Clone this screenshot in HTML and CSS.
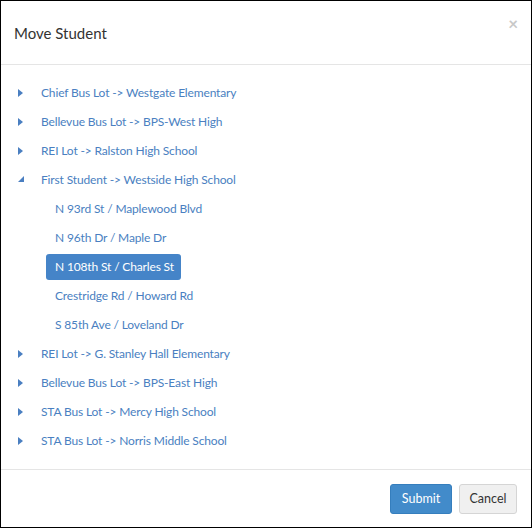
FILE: index.html
```html
<!DOCTYPE html>
<html>
<head>
<meta charset="utf-8">
<link rel="stylesheet" href="styles.css">
</head>
<body>
<div class="modal">
  <div class="modal-header">
    <h4 class="title">Move Student</h4>
    <span class="close">×</span>
  </div>
  <div class="modal-body">
    <ul class="tree">
      <li class="node"><span class="arrow closed"></span><a>Chief Bus Lot -&gt; Westgate Elementary</a></li>
      <li class="node"><span class="arrow closed"></span><a>Bellevue Bus Lot -&gt; BPS-West High</a></li>
      <li class="node"><span class="arrow closed"></span><a>REI Lot -&gt; Ralston High School</a></li>
      <li class="node"><span class="arrow open"></span><a>First Student -&gt; Westside High School</a></li>
      <li class="child"><a>N 93rd St / Maplewood Blvd</a></li>
      <li class="child"><a>N 96th Dr / Maple Dr</a></li>
      <li class="child"><a class="selected">N 108th St / Charles St</a></li>
      <li class="child"><a>Crestridge Rd / Howard Rd</a></li>
      <li class="child"><a>S 85th Ave / Loveland Dr</a></li>
      <li class="node"><span class="arrow closed"></span><a>REI Lot -&gt; G. Stanley Hall Elementary</a></li>
      <li class="node"><span class="arrow closed"></span><a>Bellevue Bus Lot -&gt; BPS-East High</a></li>
      <li class="node"><span class="arrow closed"></span><a>STA Bus Lot -&gt; Mercy High School</a></li>
      <li class="node"><span class="arrow closed"></span><a>STA Bus Lot -&gt; Norris Middle School</a></li>
    </ul>
  </div>
  <div class="modal-footer">
    <button class="btn btn-primary">Submit</button>
    <button class="btn btn-default">Cancel</button>
  </div>
</div>
</body>
</html>
```

FILE: styles.css
```css
* { box-sizing: border-box; }
html, body { margin: 0; padding: 0; background: #fff; }
body { font-family: "Lato", "Liberation Sans", sans-serif; font-size: 12px; letter-spacing: -0.15px; color: #333; }
.modal {
  width: 532px;
  height: 528px;
  border: 1px solid #000;
  display: flex;
  flex-direction: column;
}
.modal-header {
  height: 64px;
  border-bottom: 1px solid #e5e5e5;
  display: flex;
  align-items: center;
  padding: 0 13px 0 13px;
  position: relative;
}
.title {
  margin: 0;
  font-size: 15px;
  font-weight: normal;
  color: #333;
  line-height: 20px;
  letter-spacing: 0;
}
.close {
  position: absolute;
  right: 13px;
  top: 14px;
  font-size: 17px;
  line-height: 18px;
  color: #c8c8c8;
  font-weight: bold;
}
.modal-body {
  flex: 1;
  padding: 13px 0 0 0;
}
.tree { list-style: none; margin: 0; padding: 0; }
.tree li {
  height: 29px;
  display: flex;
  align-items: center;
}
.tree a { color: #4a7fc1; white-space: nowrap; }
.node { padding-left: 17px; }
.arrow { display: inline-block; width: 23px; height: 10px; position: relative; }
.arrow.closed::before {
  content: "";
  position: absolute;
  left: 0; top: 1px;
  border-left: 5px solid #4a7fc1;
  border-top: 4px solid transparent;
  border-bottom: 4px solid transparent;
}
.arrow.open::before {
  content: "";
  position: absolute;
  left: 0; top: 1px;
  border-bottom: 6px solid #4a7fc1;
  border-left: 6px solid transparent;
}
.child { padding-left: 45px; }
.child a { padding: 0 7px 0 9px; line-height: 26px; height: 26px; border-radius: 3px; }
.child a.selected { background: #4584c8; color: #fff; }
.modal-footer {
  height: 58px;
  border-top: 1px solid #e5e5e5;
  display: flex;
  justify-content: flex-end;
  align-items: center;
  gap: 7px;
  padding: 0 14px 0 0;
}
.btn {
  font-family: inherit;
  font-size: 12.5px;
  letter-spacing: 0;
  height: 30px;
  border-radius: 3px;
  padding: 0;
  border: 1px solid;
  margin: 0;
}
.btn-primary { background: #428bca; border-color: #357ebd; color: #fff; width: 62px; }
.btn-default { background: #f0f0f0; border-color: #d5d5d5; color: #333; width: 58px; }
```
